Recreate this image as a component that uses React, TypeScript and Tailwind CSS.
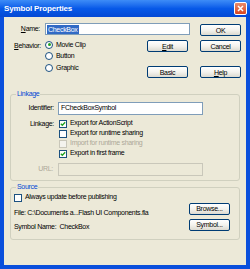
import React from "react";

function Btn({ children, className = "" }: { children: React.ReactNode; className?: string }) {
    return (
        <div
            className={`flex h-[12px] w-[41px] items-center justify-center rounded-[2px] border border-[#003c74] bg-gradient-to-b from-white via-[#f4f3ee] to-[#dcdad0] text-[7px] leading-none text-black ${className}`}
        >
            {children}
        </div>
    );
}

function Radio({ checked, label }: { checked?: boolean; label: string }) {
    return (
        <div className="flex h-[11.5px] items-center">
            <div className="flex h-[8px] w-[8px] items-center justify-center rounded-full border border-[#1c5180] bg-white">
                {checked && <div className="h-[3px] w-[3px] rounded-full bg-[#21a121]" />}
            </div>
            <span className="ml-[3px]">{label}</span>
        </div>
    );
}

function Check({ checked, disabled }: { checked?: boolean; disabled?: boolean }) {
    return (
        <div
            className={`flex h-[8px] w-[8px] shrink-0 items-center justify-center border ${
                disabled ? "border-[#c9c7ba] bg-[#f4f3ee]" : "border-[#1c5180] bg-white"
            }`}
        >
            {checked && (
                <svg width="6" height="6" viewBox="0 0 6 6">
                    <path d="M0.8 2.8 L2.3 4.3 L5.2 1.2" stroke="#21a121" strokeWidth="1.3" fill="none" />
                </svg>
            )}
        </div>
    );
}

function CheckRow({ checked, disabled, label }: { checked?: boolean; disabled?: boolean; label: string }) {
    return (
        <div className="flex h-[10px] items-center">
            <Check checked={checked} disabled={disabled} />
            <span className={`ml-[3px] ${disabled ? "text-[#aca899]" : ""}`}>{label}</span>
        </div>
    );
}

export default function App() {
    return (
        <div className="flex h-[269px] w-[250px] flex-col bg-[#0a4fdc] font-['Liberation_Sans',Arial,sans-serif] text-[7px] tracking-[-0.3px] text-black">
            {/* title bar */}
            <div className="flex h-[17px] shrink-0 items-center justify-between bg-gradient-to-b from-[#3d8cf7] via-[#0759e8] to-[#0448d4] pl-[4px] pr-[3px]">
                <span className="text-[8px] font-bold tracking-[-0.15px] text-white">Symbol Properties</span>
                <div className="flex h-[13px] w-[13px] items-center justify-center rounded-[2px] border border-white bg-gradient-to-b from-[#e88a6a] to-[#d9451d]">
                    <svg width="7" height="7" viewBox="0 0 7 7">
                        <path d="M1 1 L6 6 M6 1 L1 6" stroke="white" strokeWidth="1.5" />
                    </svg>
                </div>
            </div>

            <div className="mx-[4px] mb-[4px] flex-1 bg-[#ece9d8]">
                {/* top section */}
                <div className="flex pt-[6px]">
                    <div className="w-[186px]">
                        <div className="flex h-[12px] items-center">
                            <span className="w-[36px] text-right">
                                <span className="underline">N</span>ame:
                            </span>
                            <div className="ml-[5px] flex h-[12px] w-[145px] items-center border border-[#7f9db9] bg-white pl-[1px]">
                                <span className="bg-[#316ac5] px-[1px] leading-[9px] text-white">CheckBox</span>
                            </div>
                        </div>
                        <div className="mt-[5px] flex">
                            <span className="mt-[1px] w-[37px] text-right">
                                <span className="underline">B</span>ehavior:
                            </span>
                            <div className="ml-[4px] -mt-[1px] w-[102px]">
                                <Radio checked label="Movie Clip" />
                                <Radio label="Button" />
                                <Radio label="Graphic" />
                            </div>
                            <div className="flex flex-col">
                                <Btn>
                                    <span className="underline">E</span>dit
                                </Btn>
                                <Btn className="mt-[14px]">Basic</Btn>
                            </div>
                        </div>
                    </div>
                    <div className="ml-[10px] flex flex-col pt-[1px]">
                        <Btn>OK</Btn>
                        <Btn className="mt-[4px]">Cancel</Btn>
                        <Btn className="mt-[14px]">
                            <span className="underline">H</span>elp
                        </Btn>
                    </div>
                </div>

                {/* linkage */}
                <fieldset className="mx-[6px] mt-[11px] h-[92px] rounded-[3px] border border-[#d0d0bf] px-[4px]">
                    <legend className="ml-[1px] px-[1px] text-[#0046d5]">Linkage</legend>
                    <div className="mt-[2px] flex h-[13px] items-center">
                        <span className="w-[39px] text-right">Identifier:</span>
                        <div className="ml-[4px] flex h-[13px] w-[145px] items-center border border-[#7f9db9] bg-white pl-[2px]">
                            FCheckBoxSymbol
                        </div>
                    </div>
                    <div className="mt-[4px] flex">
                        <span className="w-[39px] text-right leading-[10px]">Linkage:</span>
                        <div className="ml-[5px]">
                            <CheckRow checked label="Export for ActionScript" />
                            <CheckRow label="Export for runtime sharing" />
                            <CheckRow disabled label="Import for runtime sharing" />
                            <CheckRow checked label="Export in first frame" />
                        </div>
                    </div>
                    <div className="mt-[4px] flex h-[13px] items-center">
                        <span className="w-[38px] text-right text-[#aca899]">URL:</span>
                        <div className="ml-[5px] h-[13px] w-[145px] border border-[#c9c7ba] bg-[#ece9d8]" />
                    </div>
                </fieldset>

                {/* source */}
                <fieldset className="mx-[6px] mt-[1px] h-[58px] rounded-[3px] border border-[#d0d0bf] px-[3px]">
                    <legend className="ml-[2px] px-[1px] text-[#0046d5]">Source</legend>
                    <CheckRow label="Always update before publishing" />
                    <div className="flex justify-between pr-[6px]">
                        <div className="pt-[3px] leading-[14px]">
                            <div>File: C:\Documents a...Flash UI Components.fla</div>
                            <div>
                                Symbol Name:&nbsp;&nbsp;CheckBox
                            </div>
                        </div>
                        <div className="flex flex-col">
                            <Btn>Browse...</Btn>
                            <Btn className="mt-[4px]">Symbol...</Btn>
                        </div>
                    </div>
                </fieldset>
            </div>
        </div>
    );
}
